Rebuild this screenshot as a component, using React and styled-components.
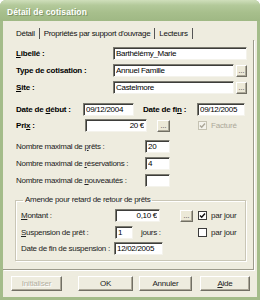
import React from "react";
import styled, { createGlobalStyle } from "styled-components";

const GlobalStyle = createGlobalStyle`
  html, body { margin: 0; padding: 0; background: #ffffff; }
  body { font-family: "Liberation Sans", Arial, sans-serif; }
  * { box-sizing: border-box; }
`;

const Check = ({ checked, disabled }) => (
  <CheckBox $disabled={disabled}>
    {checked && (
      <svg width="7" height="7" viewBox="0 0 7 7">
        <polyline
          points="1,3.5 2.7,5.3 6,1.5"
          fill="none"
          stroke={disabled ? "#aca899" : "#111"}
          strokeWidth="1.4"
        />
      </svg>
    )}
  </CheckBox>
);

const App = () => {
  return (
    <>
      <GlobalStyle />
      <Window>
        <TitleBar>Détail de cotisation</TitleBar>
        <Frame>
          <Tabs>
            <Tab>Détail</Tab>
            <Tab>Propriétés par support d'ouvrage</Tab>
            <Tab>Lecteurs</Tab>
          </Tabs>
          <Panel>
            <Row $mt={0}>
              <Label $w={97} $bold><U>L</U>ibellé :</Label>
              <Field $w={134} readOnly defaultValue="Barthélémy_Marie" />
            </Row>
            <Row $mt={4}>
              <Label $w={97} $bold>Type de cotisation :</Label>
              <Field $w={121} readOnly defaultValue="Annuel Famille" />
              <Dots $ml={2} $w={11}>...</Dots>
            </Row>
            <Row $mt={4}>
              <Label $w={97} $bold><U>S</U>ite :</Label>
              <Field $w={121} readOnly defaultValue="Castelmore" />
              <Dots $ml={2} $w={11}>...</Dots>
            </Row>
            <Row $mt={9}>
              <Label $w={67} $bold>Date de <U>d</U>ébut :</Label>
              <Field $w={51} readOnly defaultValue="09/12/2004" />
              <Label $w={54} $ml={9} $bold>Date de fi<U>n</U> :</Label>
              <Field $w={48} readOnly defaultValue="09/12/2005" />
            </Row>
            <Row $mt={3}>
              <Label $w={69} $bold>Pri<U>x</U> :</Label>
              <Field $w={62} $right readOnly defaultValue="20 €" />
              <Dots $ml={10} $w={13}>...</Dots>
              <CheckLabel $ml={28} $disabled>
                <Check checked disabled />
                Facturé
              </CheckLabel>
            </Row>
            <Row $mt={8}>
              <Label $w={129}>Nombre maximal de <U>p</U>rêts :</Label>
              <Field $w={25} readOnly defaultValue="20" />
            </Row>
            <Row $mt={4}>
              <Label $w={129}>Nombre maximal de <U>r</U>éservations :</Label>
              <Field $w={25} readOnly defaultValue="4" />
            </Row>
            <Row $mt={4}>
              <Label $w={129}>Nombre maximal de <U>n</U>ouveautés :</Label>
              <Field $w={25} readOnly defaultValue="" />
            </Row>
            <Group>
              <Legend>Amende pour retard de retour de prêts</Legend>
              <Row $mt={4}>
                <Label $w={94}><U>M</U>ontant :</Label>
                <Field $w={45} $right readOnly defaultValue="0,10 €" />
                <Dots $ml={20} $w={13}>...</Dots>
                <CheckLabel $ml={5}>
                  <Check checked />
                  par jour
                </CheckLabel>
              </Row>
              <Row $mt={4}>
                <Label $w={94}><U>S</U>uspension de prêt :</Label>
                <Field $w={18} readOnly defaultValue="1" />
                <Label $w={57} $ml={8}>jours :</Label>
                <CheckLabel>
                  <Check />
                  par jour
                </CheckLabel>
              </Row>
              <Row $mt={3}>
                <Label $w={93}>Date de fin de suspension :</Label>
                <Field $w={49} readOnly defaultValue="12/02/2005" />
              </Row>
            </Group>
          </Panel>
          <ButtonBar>
            <Button $w={51} $ml={0} disabled>Initialiser</Button>
            <Button $w={55} $ml={16}>OK</Button>
            <Button $w={53} $ml={6}>Annuler</Button>
            <Button $w={50} $ml={8}><U>A</U>ide</Button>
          </ButtonBar>
        </Frame>
      </Window>
    </>
  );
};

export default App;

const Window = styled.div`
  width: 260px;
  height: 300px;
  display: flex;
  flex-direction: column;
  border-radius: 6px 6px 0 0;
  overflow: hidden;
  background: #a4bc8a;
`;

const TitleBar = styled.div`
  height: 21px;
  flex: none;
  display: flex;
  align-items: center;
  padding: 2px 0 0 7px;
  background: linear-gradient(#cfdfbb 0%, #b3c99a 25%, #a7bf8c 60%, #9fb884 100%);
  color: #ffffff;
  font-size: 8.5px;
  font-weight: bold;
  letter-spacing: 0.1px;
  text-shadow: 1px 1px 0 #7f9566;
`;

const Frame = styled.div`
  flex: 1;
  display: flex;
  flex-direction: column;
  margin: 0 3px 3px 3px;
  background: #eeecdf;
`;

const Tabs = styled.div`
  display: flex;
  align-items: center;
  height: 14px;
  margin-top: 5px;
  padding-left: 13px;
`;

const Tab = styled.div`
  font-size: 8px;
  letter-spacing: -0.3px;
  color: #111;
  padding-right: 4px;
  margin-right: 4px;
  border-right: 1px solid #555;
  line-height: 11px;
`;

const Panel = styled.div`
  margin-right: 3px;
  padding: 7px 0 8px 13px;
  border-right: 1px solid #9c9a8c;
  border-bottom: 1px solid #9c9a8c;
  box-shadow: 1px 1px 0 #ffffff;
`;

const Row = styled.div`
  display: flex;
  align-items: center;
  height: 13px;
  margin-top: ${p => p.$mt}px;
`;

const Label = styled.span`
  flex: none;
  width: ${p => p.$w}px;
  margin-left: ${p => p.$ml || 0}px;
  font-size: 8px;
  letter-spacing: ${p => (p.$bold ? "-0.2px" : "-0.3px")};
  font-weight: ${p => (p.$bold ? "bold" : "normal")};
  color: ${p => (p.$bold ? "#000" : "#222")};
  white-space: nowrap;
`;

const U = styled.span`
  text-decoration: underline;
`;

const Field = styled.input`
  flex: none;
  width: ${p => p.$w}px;
  height: 13px;
  margin: 0;
  padding: 0 2px;
  border: 1px solid;
  border-color: #7b7a70 #f4f3ec #f4f3ec #7b7a70;
  box-shadow: inset 1px 1px 0 #3d3d3a;
  background: #ffffff;
  font-family: "Liberation Sans", Arial, sans-serif;
  font-size: 8px;
  letter-spacing: -0.3px;
  color: #000;
  text-align: ${p => (p.$right ? "right" : "left")};
  outline: none;
`;

const Dots = styled.button`
  flex: none;
  width: ${p => p.$w}px;
  height: 12px;
  margin: 0 0 0 ${p => p.$ml}px;
  padding: 0 0 2px 0;
  display: flex;
  align-items: flex-end;
  justify-content: center;
  border: 1px solid;
  border-color: #ffffff #716f64 #716f64 #ffffff;
  box-shadow: inset -1px -1px 0 #aca899;
  background: #ece9d8;
  font-family: "Liberation Sans", Arial, sans-serif;
  font-size: 7px;
  line-height: 6px;
  color: #333;
`;

const CheckLabel = styled.span`
  display: flex;
  align-items: center;
  gap: 4px;
  margin-left: ${p => p.$ml || 0}px;
  font-size: 8px;
  letter-spacing: -0.2px;
  color: ${p => (p.$disabled ? "#aca899" : "#222")};
  white-space: nowrap;
`;

const CheckBox = styled.span`
  width: 9px;
  height: 9px;
  display: flex;
  align-items: center;
  justify-content: center;
  border: 1px solid ${p => (p.$disabled ? "#c5c2b2" : "#3a3a3a")};
  background: ${p => (p.$disabled ? "#f4f3ec" : "#ffffff")};
`;

const Group = styled.fieldset`
  width: 231px;
  margin: 8px 0 0 -1px;
  padding: 0 0 5px 5px;
  border: 1px solid #c9c6b6;
  box-shadow: 1px 1px 0 #ffffff, inset 1px 1px 0 #ffffff;
`;

const Legend = styled.legend`
  margin-left: 2px;
  padding: 0 2px;
  font-size: 8px;
  line-height: 10px;
  letter-spacing: -0.3px;
  color: #222;
`;

const ButtonBar = styled.div`
  display: flex;
  align-items: center;
  margin-top: 6px;
  padding-left: 8px;
`;

const Button = styled.button`
  flex: none;
  width: ${p => p.$w}px;
  height: 15px;
  margin: 0 0 0 ${p => p.$ml}px;
  padding: 0;
  border: 1px solid;
  border-color: #ffffff #716f64 #716f64 #ffffff;
  box-shadow: inset -1px -1px 0 #aca899;
  background: #eeecdf;
  font-family: "Liberation Sans", Arial, sans-serif;
  font-size: 8px;
  letter-spacing: -0.2px;
  color: #222;
  &:disabled {
    color: #b3b09f;
    text-shadow: 1px 1px 0 #ffffff;
  }
`;
